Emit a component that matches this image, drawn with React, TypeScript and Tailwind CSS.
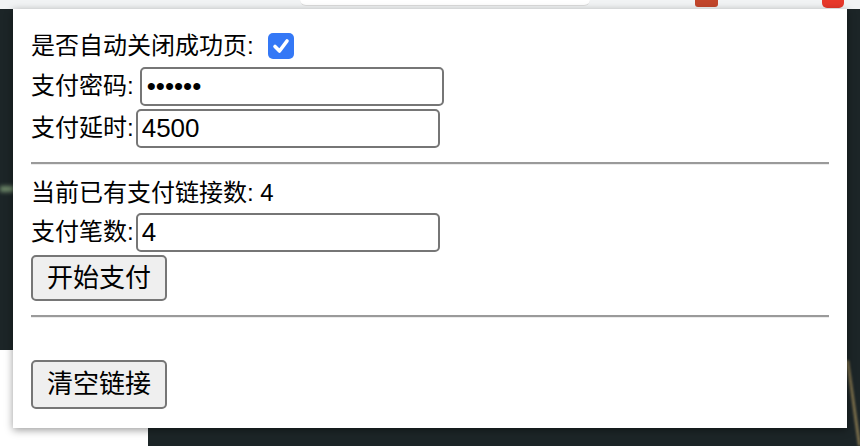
import { useState } from 'react';

const font = { fontFamily: '"Liberation Sans", "Noto Sans CJK SC", sans-serif' };

export default function App() {
  const [autoClose, setAutoClose] = useState(true);
  const [password, setPassword] = useState('123456');
  const [delay, setDelay] = useState('4500');
  const [count, setCount] = useState('4');

  return (
    <div className="relative w-[860px] h-[446px] overflow-hidden bg-[#1c2527]" style={font}>
      {/* browser chrome behind the popup */}
      <div className="h-[9px] bg-[#f1f3f4] flex items-start">
        <div className="ml-[300px] w-[290px] h-[6px] bg-white rounded-b-[10px] border-b border-[#dcdcdc]" />
        <div className="ml-[105px] w-[23px] h-[7px] bg-[#c2462b] rounded-b-[3px]" />
        <div className="ml-[104px] w-[22px] h-[8px] bg-[#e8392b] rounded-b-[5px]" />
      </div>
      <div className="absolute left-0 top-[350px] w-[20px] h-[96px] bg-white" />
      <div className="absolute left-0 top-[420px] w-[148px] h-[26px] bg-white" />
      <div className="absolute left-0 top-[186px] w-[14px] h-[6px] bg-[#6f8a6a] blur-[2px]" />
      <div className="absolute left-[852px] top-[360px] w-[3px] h-[86px] bg-[#7a6d4a] rotate-[-8deg] blur-[1px]" />

      {/* popup */}
      <div className="absolute left-[13px] top-[9px] w-[834px] h-[419px] bg-white shadow-[0_2px_8px_rgba(0,0,0,0.4)] px-[18px] pt-[18px] text-[24px] text-black">
        <div className="h-[38px] flex items-center">
          <span>是否自动关闭成功页:</span>
          <button
            type="button"
            onClick={() => setAutoClose(!autoClose)}
            className={`ml-[14px] w-[26px] h-[26px] rounded-[5px] flex items-center justify-center ${
              autoClose ? 'bg-[#3478f6]' : 'bg-white border-2 border-[#767676]'
            }`}
          >
            {autoClose && (
              <svg width="20" height="20" viewBox="0 0 20 20">
                <path d="M4 10.5 L8.5 15 L16 5" fill="none" stroke="white" strokeWidth="3.6" strokeLinecap="round" strokeLinejoin="round" />
              </svg>
            )}
          </button>
        </div>

        <div className="h-[42px] flex items-center">
          <span>支付密码:</span>
          <input
            type="password"
            value={password}
            onChange={(e) => setPassword(e.target.value)}
            className="ml-[6px] w-[304px] h-[39px] border-2 border-[#767676] rounded-[5px] px-[5px] text-[26px] outline-none"
          />
        </div>

        <div className="h-[42px] flex items-center">
          <span>支付延时:</span>
          <input
            type="text"
            value={delay}
            onChange={(e) => setDelay(e.target.value)}
            className="ml-[2px] w-[304px] h-[39px] border-2 border-[#767676] rounded-[5px] px-[4px] text-[26px] outline-none"
          />
        </div>

        <hr className="mt-[13px] border-t-2 border-b border-t-[#9a9a9a] border-b-[#ececec]" />

        <div className="mt-[10px] h-[36px] flex items-center">
          <span>当前已有支付链接数: 4</span>
        </div>

        <div className="h-[42px] flex items-center">
          <span>支付笔数:</span>
          <input
            type="text"
            value={count}
            onChange={(e) => setCount(e.target.value)}
            className="ml-[2px] w-[304px] h-[39px] border-2 border-[#767676] rounded-[5px] px-[4px] text-[26px] outline-none"
          />
        </div>

        <button
          type="button"
          className="mt-[2px] w-[136px] h-[46px] bg-[#efefef] border-2 border-[#767676] rounded-[5px] text-[26px] flex items-center justify-center"
        >
          开始支付
        </button>

        <hr className="mt-[14px] border-t-2 border-b border-t-[#9a9a9a] border-b-[#ececec]" />

        <button
          type="button"
          className="mt-[42px] w-[136px] h-[49px] bg-[#efefef] border-2 border-[#767676] rounded-[5px] text-[26px] flex items-center justify-center"
        >
          清空链接
        </button>
      </div>
    </div>
  );
}
